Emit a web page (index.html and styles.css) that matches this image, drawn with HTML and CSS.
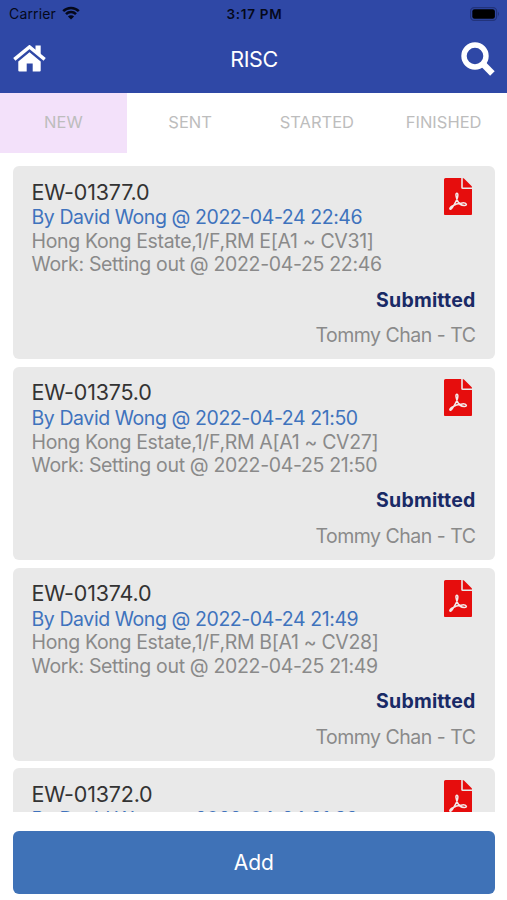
FILE: index.html
```
<!DOCTYPE html>
<html lang="en">
<head>
<meta charset="utf-8">
<title>RISC</title>
<link rel="stylesheet" href="styles.css">
</head>
<body>
<svg width="0" height="0" class="defs">
  <symbol id="pdf" viewBox="0 0 28 37.3"><path d="M1.6 0H17.2v9.4q0 1.6 1.6 1.6H28v24.7q0 1.6-1.6 1.6H1.6Q0 37.3 0 35.7V1.6Q0 0 1.6 0zM18.8 0q.7 0 1.2.5L27.5 8q.5.5.5 1.2v.2h-9.2z"/><path d="M13 15.2c-2 0-.7 4.4.3 7.2 1.4 3.2 4 5.2 7.2 5.1 3.2-.2 2.2-2.9-2.1-2.6-4 .2-8.200 1.700-10.900 3.500-3.200 2.300-1.200 4.300.8 1.100 2-3 4.600-7.200 5.300-10.400.5-2.400.3-3.900-.6-3.900z" fill="none" stroke="#f3eaea" stroke-width="1.5" stroke-linejoin="round"/></symbol>
</svg>
<div class="app">
  <header class="header">
    <div class="status">
      <div class="carrier"><span>Carrier</span>
        <svg class="wifi" viewBox="0 0 18 14"><path d="M1.2 5.2a11 11 0 0 1 15.6 0M4 8.1a7 7 0 0 1 10 0" fill="none" stroke="#05081a" stroke-width="2.5"/><path d="M9 13.6L5.9 10.6a4.4 4.400 0 0 1 6.2 0z" fill="#05081a"/></svg>
      </div>
      <div class="clock">3:17 PM</div>
      <svg class="battery" viewBox="0 0 30 14"><rect x=".6" y=".6" width="26" height="12.8" rx="3.6" fill="none" stroke="#22337b" stroke-width="1.2"/><rect x="2.3" y="2.3" width="22.6" height="9.4" rx="2.2" fill="#000"/><path d="M28 4.8q2 2.2 0 4.4z" fill="#22337b"/></svg>
    </div>
    <div class="nav">
      <svg class="home" viewBox="0 0 33 27" fill="#fff"><path d="M5.3 16.400L16.500 7.200l11.200 9.200v9q0 1-1 1h-7v-8h-6v8h-7.200q-1.200 0-1.200-1z"/><path d="M1.300 14.400L16.500 1.900l15.200 12.500" fill="none" stroke="#fff" stroke-width="3.400"/><path d="M22.500 .5h5.200v10L22.500 6.600z"/></svg>
      <h1 class="title">RISC</h1>
      <svg class="search" viewBox="0 0 34 34" fill="none" stroke="#fff"><circle cx="14" cy="14" r="11" stroke-width="5.4"/><path d="M21.800 21.800l9.600 9.600" stroke-width="6.400"/></svg>
    </div>
  </header>
  <nav class="tabs"><div class="tab active">NEW</div><div class="tab">SENT</div><div class="tab">STARTED</div><div class="tab">FINISHED</div></nav>
  <main class="list">
    <article class="card"><svg class="pdf"><use href="#pdf"/></svg><h2>EW-01377.0</h2><p class="by">By David Wong @ 2022-04-24 22:46</p><p class="loc">Hong Kong Estate,1/F,RM E[A1 ~ CV31]</p><p class="work">Work: Setting out @ 2022-04-25 22:46</p><p class="state">Submitted</p><p class="who">Tommy Chan - TC</p></article>
    <article class="card"><svg class="pdf"><use href="#pdf"/></svg><h2>EW-01375.0</h2><p class="by">By David Wong @ 2022-04-24 21:50</p><p class="loc">Hong Kong Estate,1/F,RM A[A1 ~ CV27]</p><p class="work">Work: Setting out @ 2022-04-25 21:50</p><p class="state">Submitted</p><p class="who">Tommy Chan - TC</p></article>
    <article class="card"><svg class="pdf"><use href="#pdf"/></svg><h2>EW-01374.0</h2><p class="by">By David Wong @ 2022-04-24 21:49</p><p class="loc">Hong Kong Estate,1/F,RM B[A1 ~ CV28]</p><p class="work">Work: Setting out @ 2022-04-25 21:49</p><p class="state">Submitted</p><p class="who">Tommy Chan - TC</p></article>
    <article class="card"><svg class="pdf"><use href="#pdf"/></svg><h2>EW-01372.0</h2><p class="by">By David Wong @ 2022-04-24 21:38</p></article>
  </main>
  <footer class="footer"><button class="add">Add</button></footer>
</div>
</body>
</html>
```
FILE: styles.css
```
* { box-sizing: border-box; margin: 0; padding: 0; }
body { font-family: Inter, sans-serif; background: #fff; }
.defs { position: absolute; }
.app { width: 507px; height: 900px; display: flex; flex-direction: column; overflow: hidden; }
.header { height: 92.5px; flex: none; background: #2f48a6; }
.status { height: 27px; display: grid; grid-template-columns: 1fr auto 1fr; align-items: center; padding: 0 7px 0 9px; color: #05081a; font-size: 14px; }
.carrier { display: flex; align-items: center; gap: 6px; letter-spacing: 0.15px; }
.wifi { width: 18px; height: 14px; margin-top: -2px; }
.clock { font-weight: 600; font-size: 13.5px; letter-spacing: 0.7px; }
.battery { width: 30px; height: 14px; justify-self: end; }
.nav { height: 63.5px; display: grid; grid-template-columns: 1fr auto 1fr; align-items: center; padding: 0 12px 0 13px; }
.home { width: 33px; height: 27px; }
.title { color: #fff; font-weight: 400; font-size: 21.5px; letter-spacing: -0.4px; }
.search { width: 34px; height: 34px; justify-self: end; }
.tabs { height: 60px; flex: none; display: grid; grid-template-columns: repeat(4, 1fr); }
.tab { display: flex; align-items: center; justify-content: center; padding-bottom: 1.5px; font-size: 16.5px; color: #bdbdbd; }
.active { background: #f3e1fa; }
.list { height: 659.5px; flex: none; overflow: hidden; padding: 13.5px 12.5px 0 13px; display: flex; flex-direction: column; gap: 7.5px; }
.card { position: relative; flex: none; height: 193.3px; background: #e9e9e9; border-radius: 6px; padding: 12.5px 19px 0 18.5px; white-space: nowrap; }
.pdf { position: absolute; right: 22.5px; top: 12px; width: 28px; height: 37.3px; fill: #e60d0d; }
.card h2 { font-weight: 400; font-size: 21.5px; line-height: 26px; color: #333; letter-spacing: -0.2px; }
.card p { font-size: 19.5px; line-height: 23.7px; color: #8a8a8a; letter-spacing: -0.33px; }
.card .by { color: #3f73bd; letter-spacing: -0.42px; margin-top: 1.5px; }
.card .loc { letter-spacing: -0.34px; }
.card .state { text-align: right; font-weight: 700; font-size: 19.5px; letter-spacing: 0.2px; color: #192a66; margin-top: 11.5px; }
.card .who { text-align: right; letter-spacing: -0.5px; margin-top: 12px; }
.footer { padding: 18.5px 12.5px 0 13px; }
.add { width: 100%; height: 63.5px; border: 0; border-radius: 6px; background: #3f72b7; color: #fff; font: 400 21px Inter, sans-serif; letter-spacing: -0.1px; }
```
